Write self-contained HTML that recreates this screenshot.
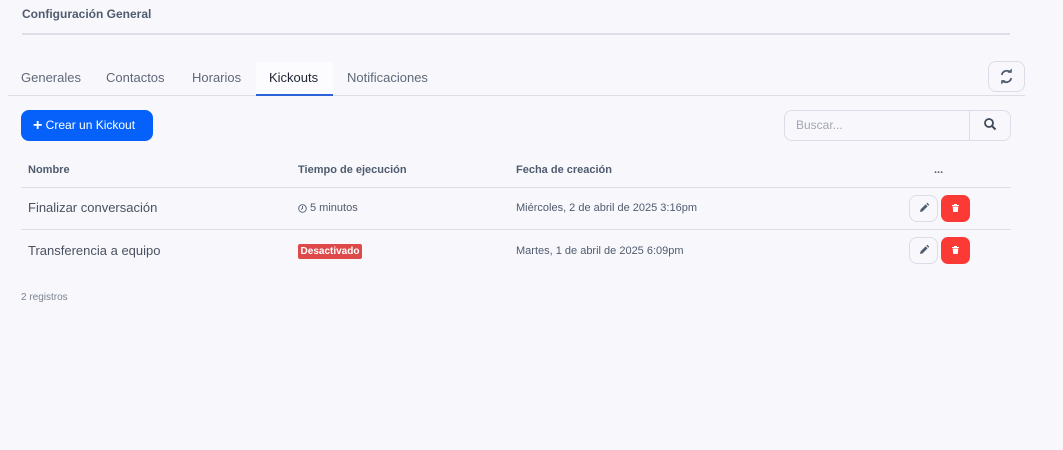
<!DOCTYPE html>
<html><head><meta charset="utf-8"><style>
*{box-sizing:border-box;margin:0;padding:0}
body{width:1063px;height:450px;background:#f8f8fc;font-family:"Liberation Sans",sans-serif;position:relative;overflow:hidden;color:#4a5568}
.a{position:absolute}
.title{left:22px;top:7px;font-size:12px;font-weight:bold;color:#4f5b6e}
.tab{top:70px;font-size:13px;color:#5f6878}
.btn{border:1px solid #dcdce8;border-radius:8px;background:#f8f8fc}
.th{top:164px;font-size:11px;font-weight:bold;color:#4f5b6e}
.td{font-size:11px;color:#4f5b6e}
</style></head><body>
<div class="a title">Configuración General</div>
<div class="a" style="left:22px;top:33px;width:988px;height:2px;background:#dedde8"></div>
<div class="a" style="left:256px;top:62px;width:77px;height:33px;background:#fcfcff"></div>
<div class="a tab" style="left:21px">Generales</div>
<div class="a tab" style="left:106px">Contactos</div>
<div class="a tab" style="left:192px">Horarios</div>
<div class="a tab" style="left:269px;color:#1f2530">Kickouts</div>
<div class="a tab" style="left:347px">Notificaciones</div>
<div class="a" style="left:8px;top:95px;width:1017px;height:1px;background:#dedde8"></div>
<div class="a" style="left:256px;top:94px;width:77px;height:2px;background:#2a62d8"></div>
<div class="a btn" style="left:988px;top:61px;width:37px;height:31px"><svg width="35" height="29" viewBox="0 0 35 29"><g fill="none" stroke="#4f5b6e" stroke-width="1.8"><path d="M12.8 13a5 5 0 0 1 8.7-2.5"/><path d="M22.2 16a5 5 0 0 1-8.7 2.5"/></g><path d="M18.5 10.8h4.3v-4.3z" fill="#4f5b6e"/><path d="M16.5 18.2h-4.3v4.3z" fill="#4f5b6e"/></svg></div>
<div class="a" style="left:21px;top:110px;width:132px;height:31px;background:#0561fa;border-radius:8px;color:#fff;font-size:12px;line-height:31px;padding-left:12px"><b style="font-size:16px;vertical-align:-1px">+</b> Crear un Kickout</div>
<div class="a" style="left:784px;top:110px;width:227px;height:31px;border:1px solid #dcdce8;border-radius:8px"></div>
<div class="a" style="left:969px;top:110px;width:1px;height:31px;background:#dcdce8"></div>
<div class="a" style="left:796px;top:118px;font-size:12px;color:#a0a6b2">Buscar...</div>
<svg class="a" style="left:983px;top:117px" width="14" height="14" viewBox="0 0 14 14"><circle cx="6" cy="6" r="4" fill="none" stroke="#3f4a5a" stroke-width="1.8"/><path d="M9 9l3.5 3.5" stroke="#3f4a5a" stroke-width="2"/></svg>
<div class="a th" style="left:28px">Nombre</div>
<div class="a th" style="left:298px">Tiempo de ejecución</div>
<div class="a th" style="left:516px">Fecha de creación</div>
<div class="a th" style="left:934px">...</div>
<div class="a" style="left:21px;top:187px;width:990px;height:1px;background:#dedde8"></div>
<div class="a" style="left:21px;top:229px;width:990px;height:1px;background:#dedde8"></div>
<div class="a" style="left:28px;top:200px;font-size:13px;color:#4a5160">Finalizar conversación</div>
<svg class="a" style="left:298px;top:204px" width="9" height="9" viewBox="0 0 9 9"><circle cx="4.5" cy="4.5" r="3.8" fill="none" stroke="#4f5b6e" stroke-width="0.9"/><path d="M4.5 2v2.5L3 5.5" fill="none" stroke="#4f5b6e" stroke-width="0.9"/></svg>
<div class="a td" style="left:310px;top:202px">5 minutos</div>
<div class="a td" style="left:516px;top:202px">Miércoles, 2 de abril de 2025 3:16pm</div>
<div class="a" style="left:28px;top:243px;font-size:13px;color:#4a5160">Transferencia a equipo</div>
<div class="a" style="left:298px;top:244px;width:64px;height:15px;background:#de4a4a;border-radius:2px;color:#fff;font-size:10px;font-weight:bold;line-height:15px;text-align:center">Desactivado</div>
<div class="a td" style="left:516px;top:245px">Martes, 1 de abril de 2025 6:09pm</div>
<div class="a btn" style="left:909px;top:195px;width:29px;height:27px"><svg width="27" height="25" viewBox="0 0 27 25"><path d="M10 16l0.6-2.6 5-5 2 2-5 5z M16.3 7.7l1-1 2 2-1 1z" fill="#4f5b6e"/></svg></div>
<div class="a" style="left:941px;top:195px;width:29px;height:27px;background:#fc3a35;border-radius:7px"><svg width="29" height="27" viewBox="0 0 29 27"><path d="M11 10h7v1h-7z M13 9h3v1h-3z M11.7 11.5h5.6l-0.5 5.5h-4.6z" fill="#fff"/></svg></div>
<div class="a btn" style="left:909px;top:237px;width:29px;height:27px"><svg width="27" height="25" viewBox="0 0 27 25"><path d="M10 16l0.6-2.6 5-5 2 2-5 5z M16.3 7.7l1-1 2 2-1 1z" fill="#4f5b6e"/></svg></div>
<div class="a" style="left:941px;top:237px;width:29px;height:27px;background:#fc3a35;border-radius:7px"><svg width="29" height="27" viewBox="0 0 29 27"><path d="M11 10h7v1h-7z M13 9h3v1h-3z M11.7 11.5h5.6l-0.5 5.5h-4.6z" fill="#fff"/></svg></div>
<div class="a" style="left:21px;top:292px;font-size:10px;color:#7a8290">2 registros</div>
</body></html>
